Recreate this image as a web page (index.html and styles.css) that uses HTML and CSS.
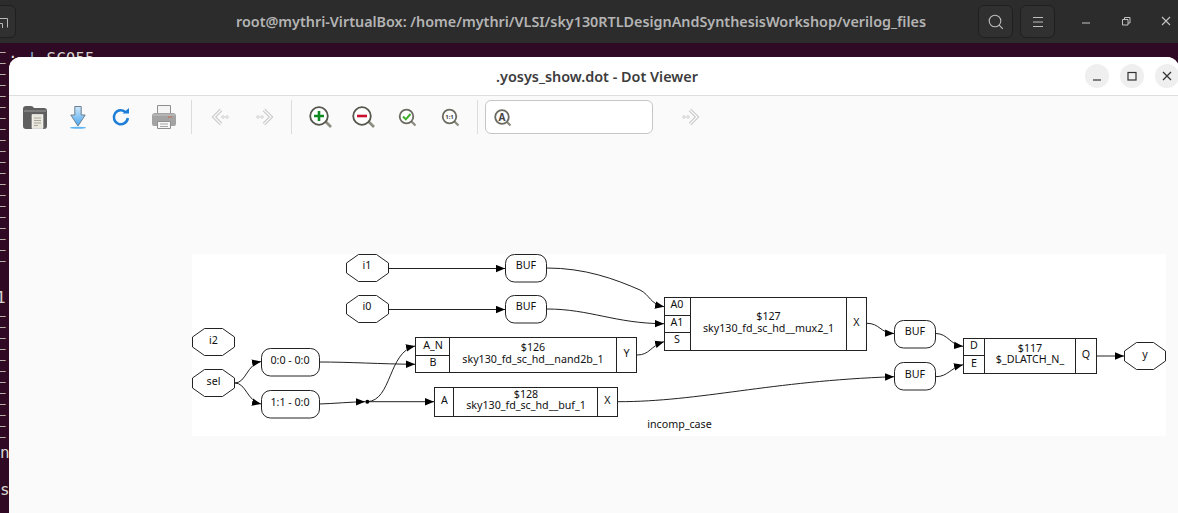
FILE: index.html
```html
<!DOCTYPE html>
<html lang="en">
<head>
    <meta charset="UTF-8">
    <meta name="viewport" content="width=device-width, initial-scale=1.0">
    <title>Dot Viewer</title>
    <link rel="stylesheet" href="styles.css">
</head>
<body>
    <!-- terminal behind the viewer -->
    <div class="terminal">
        <header class="term-bar">
            <div class="term-btn term-btn-left">
                <svg width="12" height="14" viewBox="0 0 12 14"><path d="M0 3.500h7.500v9M0 8.500h2.500v4.500" fill="none" stroke="#b8b8b8" stroke-width="1"/></svg>
            </div>
            <div class="term-title">root@mythri-VirtualBox: /home/mythri/VLSI/sky130RTLDesignAndSynthesisWorkshop/verilog_files</div>
            <div class="term-btn">
                <svg width="16" height="16" viewBox="0 0 16 16"><circle cx="7" cy="7" r="5.800" fill="none" stroke="#bdbdbd" stroke-width="1.100"/><path d="M11.200 11.200l3.600 3.600" stroke="#bdbdbd" stroke-width="1.200"/></svg>
            </div>
            <div class="term-btn">
                <svg width="12" height="12" viewBox="0 0 12 12"><path d="M1 1.500h10M1 6h10M1 10.500h10" stroke="#bdbdbd" stroke-width="1"/></svg>
            </div>
            <div class="term-wm">
                <svg width="10" height="10" viewBox="0 0 10 10"><path d="M1 7h8" stroke="#c4c4c4" stroke-width="1"/></svg>
                <svg width="10" height="10" viewBox="0 0 10 10"><path d="M1.500 3.500h5.500v5.500h-5.500zM3.500 3.500v-2h5.500v5.500h-2" fill="none" stroke="#c4c4c4" stroke-width="1"/></svg>
                <svg width="10" height="10" viewBox="0 0 10 10"><path d="M1 1l8 8M9 1l-8 8" stroke="#c4c4c4" stroke-width="1.100"/></svg>
            </div>
        </header>
        <div class="term-body">
            <div class="term-col">
                <pre class="term-rows">–
–
–
–
–
–
–
–
–
–
–
–
–
–
–
–
–
–
–
–</pre>
                <div class="term-big term-one">1</div>
                <pre class="term-rows term-rows-low">–
–
–
–
–
–
–
–
–
–
–
–</pre>
                <div class="term-big term-no">no</div>
                <div class="term-big term-sy">sy</div>
            </div>
            <div class="term-big term-prompt">: <span class="term-pipe">|</span> SC055</div>
        </div>
    </div>

    <!-- dot viewer window -->
    <div class="viewer">
        <div class="head">
            <div class="head-title">.yosys_show.dot - Dot Viewer</div>
            <div class="head-controls">
                <div class="wm-btn"><svg width="10" height="10" viewBox="0 0 10 10"><path d="M1 9h8" stroke="#333" stroke-width="1.200"/></svg></div>
                <div class="wm-btn"><svg width="10" height="10" viewBox="0 0 10 10"><rect x="1" y="1.500" width="8" height="7.500" fill="none" stroke="#333" stroke-width="1.200"/></svg></div>
                <div class="wm-btn"><svg width="10" height="10" viewBox="0 0 10 10"><path d="M1 1l8 8M9 1l-8 8" stroke="#333" stroke-width="1.300"/></svg></div>
            </div>
        </div>

        <div class="toolbar">
            <div class="tool">
                <svg width="24" height="24" viewBox="0 0 24 24">
                    <path d="M0 4q0-3 3-3h5q2 0 3 2h10q3 0 3 3v15q0 3-3 3H3q-3 0-3-3z" fill="#5f5f5f"/>
                    <path d="M1 5h22v2H1z" fill="#7d7d7d"/>
                    <path d="M9 9.500h11v14H9z" fill="#e9e7dd" stroke="#fff" stroke-width=".6"/>
                    <path d="M11 13h7M11 15.500h7M11 18h7M11 20.500h4" stroke="#a9a79b" stroke-width="1"/>
                </svg>
            </div>
            <div class="tool">
                <svg width="24" height="24" viewBox="0 0 24 24">
                    <defs><linearGradient id="dl" x1="0" y1="0" x2="0" y2="1"><stop offset="0" stop-color="#cfe7fa"/><stop offset="1" stop-color="#4aa8f0"/></linearGradient></defs>
                    <ellipse cx="12" cy="22.800" rx="8" ry="1" fill="#5db4f2"/>
                    <path d="M8.800 1.500h6.400v8.500h4l-7.200 11-7.200-11h4z" fill="url(#dl)" stroke="#6d7f8f" stroke-width="1"/>
                </svg>
            </div>
            <div class="tool">
                <svg width="24" height="24" viewBox="0 0 24 24">
                    <path d="M17 7.500A7 7 0 1 0 18.800 13" fill="none" stroke="#1f7fd8" stroke-width="2.500"/>
                    <path d="M13.500 8.500h6.500V3z" fill="#1f7fd8"/>
                </svg>
            </div>
            <div class="tool">
                <svg width="24" height="24" viewBox="0 0 24 24">
                    <path d="M5.500 .5h13v9h-13z" fill="#f4f4f4" stroke="#8e8e8e"/>
                    <path d="M0 11q0-3 3-3h18q3 0 3 3v8q0 2-2 2H2q-2 0-2-2z" fill="#a3a3a3"/>
                    <path d="M1 9.500h22v1H1z" fill="#c4c4c4"/>
                    <path d="M5.500 16.500h13v7h-13z" fill="#f7f7f7" stroke="#8e8e8e"/>
                    <path d="M8 19h8M8 21.500h8" stroke="#a5a5a5"/>
                    <path d="M16 12h1.500M18.500 12H20" stroke="#d9542b" stroke-width="1"/>
                </svg>
            </div>
            <div class="tool-sep"></div>
            <div class="tool">
                <svg width="24" height="24" viewBox="0 0 24 24">
                    <path d="M12 5l-7 7 7 7" fill="none" stroke="#c6c6c6" stroke-width="3.400"/>
                    <path d="M12 5l-7 7 7 7" fill="none" stroke="#fafafa" stroke-width="1.400"/>
                    <circle cx="14" cy="12" r="1.300" fill="none" stroke="#c6c6c6" stroke-width=".8"/>
                    <circle cx="18" cy="12" r="1.300" fill="none" stroke="#c6c6c6" stroke-width=".8"/>
                </svg>
            </div>
            <div class="tool">
                <svg width="24" height="24" viewBox="0 0 24 24">
                    <path d="M12 5l7 7-7 7" fill="none" stroke="#c6c6c6" stroke-width="3.400"/>
                    <path d="M12 5l7 7-7 7" fill="none" stroke="#fafafa" stroke-width="1.400"/>
                    <circle cx="10" cy="12" r="1.300" fill="none" stroke="#c6c6c6" stroke-width=".8"/>
                    <circle cx="6" cy="12" r="1.300" fill="none" stroke="#c6c6c6" stroke-width=".8"/>
                </svg>
            </div>
            <div class="tool-sep"></div>
            <div class="tool">
                <svg width="24" height="24" viewBox="0 0 24 24">
                    <path d="M16 16l6 6" stroke="#8b8b80" stroke-width="2.600"/>
                    <circle cx="10" cy="11" r="8.800" fill="#fff" stroke="#55554c" stroke-width="1.800"/>
                    <path d="M10 6v10M5 11h10" stroke="#0f8a22" stroke-width="2.600"/>
                </svg>
            </div>
            <div class="tool">
                <svg width="24" height="24" viewBox="0 0 24 24">
                    <path d="M16 16l6 6" stroke="#8b8b80" stroke-width="2.600"/>
                    <circle cx="10" cy="11" r="8.800" fill="#fff" stroke="#55554c" stroke-width="1.800"/>
                    <path d="M5 11h10" stroke="#c8102e" stroke-width="2.600"/>
                </svg>
            </div>
            <div class="tool">
                <svg width="24" height="24" viewBox="0 0 24 24">
                    <path d="M16 16l4.500 4.500" stroke="#8b8b80" stroke-width="2.200"/>
                    <circle cx="11.500" cy="11.500" r="6.800" fill="#fff" stroke="#6a6a60" stroke-width="1.800"/>
                    <path d="M8 11.500l2.800 2.800 4.700-5.300" fill="none" stroke="#3fae2a" stroke-width="2"/>
                </svg>
            </div>
            <div class="tool">
                <svg width="24" height="24" viewBox="0 0 24 24">
                    <path d="M16 16l4.500 4.500" stroke="#8b8b80" stroke-width="2.200"/>
                    <circle cx="11.500" cy="11.500" r="6.800" fill="#fff" stroke="#6a6a60" stroke-width="1.800"/>
                    <text x="11.500" y="14" text-anchor="middle" class="icon-small">1:1</text>
                </svg>
            </div>
            <div class="tool-sep"></div>
            <div class="search">
                <svg width="24" height="24" viewBox="0 0 24 24">
                    <path d="M16 16l4.500 4.500" stroke="#8b8b80" stroke-width="2.200"/>
                    <circle cx="12" cy="12" r="6.800" fill="#fff" stroke="#6a6a60" stroke-width="1.800"/>
                    <text x="12" y="15.500" text-anchor="middle" class="icon-letter">A</text>
                </svg>
            </div>
            <div class="tool tool-next">
                <svg width="24" height="24" viewBox="0 0 24 24">
                    <path d="M12 5l7 7-7 7" fill="none" stroke="#c6c6c6" stroke-width="3.400"/>
                    <path d="M12 5l7 7-7 7" fill="none" stroke="#fafafa" stroke-width="1.400"/>
                    <circle cx="10" cy="12" r="1.300" fill="none" stroke="#c6c6c6" stroke-width=".8"/>
                    <circle cx="6" cy="12" r="1.300" fill="none" stroke="#c6c6c6" stroke-width=".8"/>
                </svg>
            </div>
        </div>

        <div class="canvas">
            <svg class="graph" width="974" height="182" viewBox="192 254 974 182">
                <defs>
                    <marker id="arrow" markerUnits="userSpaceOnUse" markerWidth="10" markerHeight="8" refX="9" refY="4" orient="auto">
                        <path d="M0 .3L9 4 0 7.700z" fill="#000"/>
                    </marker>
                </defs>

                <!-- edges -->
                <g class="edges">
                    <path marker-end="url(#arrow)" d="M388 268.500H505"/>
                    <path marker-end="url(#arrow)" d="M388 309.500H505"/>
                    <path marker-end="url(#arrow)" d="M235 383C246 383 247 364 261 361.500"/>
                    <path marker-end="url(#arrow)" d="M235 383C246 383 247 401 261 404"/>
                    <path marker-end="url(#arrow)" d="M319 362C350 362 380 364 415 364.300"/>
                    <path marker-end="url(#arrow)" d="M319 404C335 403.500 350 402 365 401.700"/>
                    <path marker-end="url(#arrow)" d="M367 401.700H434"/>
                    <path marker-end="url(#arrow)" d="M367 401.700C392 401 388 352 415 346"/>
                    <path marker-end="url(#arrow)" d="M637 355C650 355 650 346 664 341.700"/>
                    <path marker-end="url(#arrow)" d="M546.700 268C585 268 615 279 640 290C650 295 650 304 664 306.700"/>
                    <path marker-end="url(#arrow)" d="M546.700 309C590 309 615 323.500 664 323.700"/>
                    <path marker-end="url(#arrow)" d="M866.700 323.300C880 323.300 880 333 894 333.500"/>
                    <path marker-end="url(#arrow)" d="M618 401.700C700 401.700 770 381 894 376.700"/>
                    <path marker-end="url(#arrow)" d="M935.700 333.500C948 333.500 950 345 963 346.300"/>
                    <path marker-end="url(#arrow)" d="M935.700 376.700C948 376.700 950 368 963 364.700"/>
                    <path marker-end="url(#arrow)" d="M1096.700 356H1124"/>
                </g>
                <circle cx="367.300" cy="401.700" r="2" fill="#000"/>

                <!-- nodes -->
                <g class="nodes">
                    <polygon points="358.500,254.500 376.500,254.500 388.500,263 388.500,273 376.500,281.500 358.500,281.500 346.500,273 346.500,263"/>
                    <polygon points="358.500,295.500 376.500,295.500 388.500,304 388.500,314 376.500,322.500 358.500,322.500 346.500,314 346.500,304"/>
                    <polygon points="204.500,328.500 222.500,328.500 234.500,337 234.500,347 222.500,355.500 204.500,355.500 192.500,347 192.500,337"/>
                    <polygon points="204.500,369.500 222.500,369.500 234.500,378 234.500,388 222.500,396.500 204.500,396.500 192.500,388 192.500,378"/>
                    <polygon points="1136.500,342.500 1153.500,342.500 1165.500,351 1165.500,361 1153.500,369.500 1136.500,369.500 1124.500,361 1124.500,351"/>

                    <rect x="261.500" y="348.500" width="58" height="27.500" rx="9"/>
                    <rect x="261.500" y="390.500" width="58" height="27.500" rx="9"/>
                    <rect x="505.500" y="254.500" width="41" height="27.500" rx="9"/>
                    <rect x="505.500" y="295.500" width="41" height="27.500" rx="9"/>
                    <rect x="894.500" y="320.500" width="41" height="27.500" rx="9"/>
                    <rect x="894.500" y="362.500" width="41" height="27.500" rx="9"/>

                    <rect x="415.500" y="337.500" width="221" height="35"/>
                    <path d="M449.500 337.500v35M415.500 355.500h34M616.500 337.500v35"/>

                    <rect x="434.500" y="387.500" width="183" height="29"/>
                    <path d="M453.500 387.500v29M597.500 387.500v29"/>

                    <rect x="664.500" y="297.500" width="202" height="53"/>
                    <path d="M690.500 297.500v53M664.500 315.500h26M664.500 332.500h26M846.500 297.500v53"/>

                    <rect x="963.500" y="338.500" width="133" height="35"/>
                    <path d="M984.500 338.500v35M963.500 355.500h21M1075.500 338.500v35"/>
                </g>

                <!-- labels -->
                <g class="labels">
                    <text x="367" y="269">i1</text>
                    <text x="367" y="310">i0</text>
                    <text x="213.500" y="344">i2</text>
                    <text x="213.500" y="385">sel</text>
                    <text x="1145" y="358">y</text>
                    <text x="290" y="363.500">0:0 - 0:0</text>
                    <text x="290" y="405.500">1:1 - 0:0</text>
                    <text x="526" y="269">BUF</text>
                    <text x="526" y="310">BUF</text>
                    <text x="915" y="335">BUF</text>
                    <text x="915" y="378">BUF</text>
                    <text x="433" y="348.500">A_N</text>
                    <text x="433" y="365.500">B</text>
                    <text x="533" y="351">$126</text>
                    <text x="533" y="362.500">sky130_fd_sc_hd__nand2b_1</text>
                    <text x="626.500" y="356.500">Y</text>
                    <text x="444.500" y="403.500">A</text>
                    <text x="526" y="397.500">$128</text>
                    <text x="526" y="409">sky130_fd_sc_hd__buf_1</text>
                    <text x="607.500" y="403.500">X</text>
                    <text x="677" y="308">A0</text>
                    <text x="677" y="325.500">A1</text>
                    <text x="677" y="343">S</text>
                    <text x="768.500" y="320">$127</text>
                    <text x="768.500" y="331.500">sky130_fd_sc_hd__mux2_1</text>
                    <text x="856.500" y="325.500">X</text>
                    <text x="974" y="349">D</text>
                    <text x="974" y="366.500">E</text>
                    <text x="1030" y="351.500">$117</text>
                    <text x="1030" y="363">$_DLATCH_N_</text>
                    <text x="1086" y="357.500">Q</text>
                    <text x="679.500" y="428">incomp_case</text>
                </g>
            </svg>
        </div>
    </div>
</body>
</html>
```

FILE: styles.css
```css
html, body {
    margin: 0;
    height: 100%;
}
body {
    position: relative;
    overflow: hidden;
    background: #300a24;
    font-family: "Noto Sans", sans-serif;
}

/* terminal */
.term-bar {
    display: flex;
    align-items: center;
    gap: 7px;
    height: 43px;
    background: #2c2c2c;
}
.term-btn {
    display: flex;
    align-items: center;
    justify-content: center;
    flex: none;
    box-sizing: border-box;
    width: 35px;
    height: 33px;
    background: #303030;
    border: 1px solid #1f1f1f;
    border-radius: 6px;
}
.term-btn-left {
    justify-content: flex-start;
    margin-left: -19px;
    padding-left: 18px;
}
.term-title {
    flex: none;
    width: 735px;
    margin-left: 213px;
    color: #b4b4b4;
    font-size: 14.350px;
    font-weight: 600;
    white-space: nowrap;
}
.term-wm {
    display: flex;
    align-items: center;
    gap: 30px;
    margin: 0 0 2px 19px;
}
.term-body {
    display: flex;
    color: #d6d6d0;
    font-family: "DejaVu Sans Mono", monospace;
}
.term-col {
    flex: none;
    width: 8px;
    padding-top: 3px;
    white-space: nowrap;
}
.term-rows {
    margin: 0 0 0 -1px;
    font-family: inherit;
    font-size: 11px;
    line-height: 11px;
}
.term-rows-low {
    margin-top: 4.500px;
}
.term-big {
    font-size: 16px;
    line-height: 16px;
}
.term-one {
    margin: 23.500px 0 0 -4px;
}
.term-no {
    margin-top: 2.500px;
}
.term-sy {
    margin-top: 21.500px;
}
.term-prompt {
    margin-top: 8px;
    white-space: pre;
}
.term-pipe {
    color: #8ab4d8;
}

/* viewer window */
.viewer {
    position: absolute;
    left: 9px;
    top: 57px;
    width: 1170px;
    height: 470px;
    background: #fafafa;
    border-radius: 12px 12px 0 0;
}
.head {
    display: flex;
    align-items: center;
    justify-content: center;
    position: relative;
    height: 38px;
    background: #fff;
    border-bottom: 1px solid #dedede;
    border-radius: 12px 12px 0 0;
}
.head-title {
    margin-left: 6px;
    color: #3d3d3d;
    font-size: 14.400px;
    font-weight: 600;
}
.head-controls {
    position: absolute;
    top: 7px;
    right: 0;
    display: flex;
    gap: 11px;
}
.wm-btn {
    display: flex;
    align-items: center;
    justify-content: center;
    width: 24px;
    height: 24px;
    background: #efefef;
    border-radius: 50%;
}

/* toolbar */
.toolbar {
    display: flex;
    align-items: center;
    height: 42px;
    padding-left: 4px;
}
.tool {
    display: flex;
    align-items: center;
    justify-content: center;
    width: 43px;
}
.tool-sep {
    width: 1px;
    height: 34px;
    margin: 0 7px 0 6px;
    background: #dcdcdc;
}
.search {
    display: flex;
    align-items: center;
    box-sizing: border-box;
    width: 168px;
    height: 34px;
    padding-left: 4px;
    background: #fff;
    border: 1px solid #c6c6c6;
    border-radius: 6px;
}
.tool-next {
    margin-left: 15px;
}
.icon-small {
    fill: #444;
    font-size: 6px;
    font-weight: 700;
}
.icon-letter {
    fill: #444;
    font-size: 10px;
    font-weight: 700;
}

/* graph */
.canvas {
    padding: 116px 0 0 183px;
}
.graph {
    display: block;
    background: #fff;
}
.edges path {
    fill: none;
    stroke: #222;
    stroke-width: 1;
}
.nodes polygon,
.nodes rect,
.nodes path {
    fill: none;
    stroke: #222;
    stroke-width: 1;
}
.labels text {
    fill: #111;
    font-size: 10.700px;
    text-anchor: middle;
}
```
